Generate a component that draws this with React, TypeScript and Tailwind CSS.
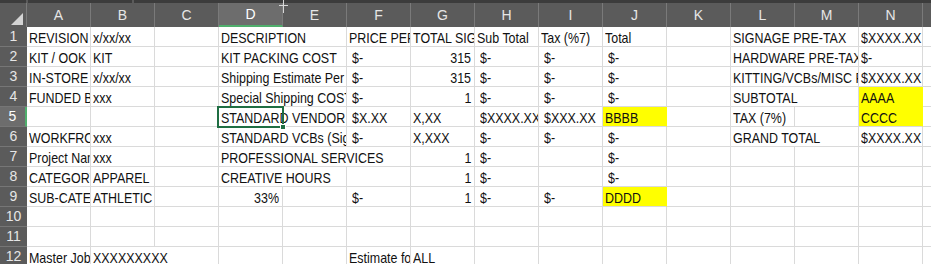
import React from "react";

type Cell = { c: number; t: string; s?: number; r?: boolean; y?: boolean; yb?: boolean };

const COLS = ["A", "B", "C", "D", "E", "F", "G", "H", "I", "J", "K", "L", "M", "N", "O"];

const SPAN: Record<number, string> = { 1: "", 2: "col-span-2", 3: "col-span-3" };

// accounting-format columns get a little extra left padding
const ACCT = [5, 7, 8, 9];

const ROWS: Cell[][] = [
  [
    { c: 0, t: "REVISION" }, { c: 1, t: "x/xx/xx" }, { c: 3, t: "DESCRIPTION", s: 2 },
    { c: 5, t: "PRICE PER" }, { c: 6, t: "TOTAL SIGNAGE" }, { c: 7, t: "Sub Total" },
    { c: 8, t: "Tax (%7)" }, { c: 9, t: "Total" }, { c: 11, t: "SIGNAGE PRE-TAX", s: 2 },
    { c: 13, t: "$XXXX.XX" },
  ],
  [
    { c: 0, t: "KIT / OOK" }, { c: 1, t: "KIT" }, { c: 3, t: "KIT PACKING COST", s: 2 },
    { c: 5, t: "$-" }, { c: 6, t: "315", r: true }, { c: 7, t: "$-" }, { c: 8, t: "$-" },
    { c: 9, t: "$-" }, { c: 11, t: "HARDWARE PRE-TAX", s: 2 }, { c: 13, t: "$-" },
  ],
  [
    { c: 0, t: "IN-STORE" }, { c: 1, t: "x/xx/xx" }, { c: 3, t: "Shipping Estimate Per Kit", s: 2 },
    { c: 5, t: "$-" }, { c: 6, t: "315", r: true }, { c: 7, t: "$-" }, { c: 8, t: "$-" },
    { c: 9, t: "$-" }, { c: 11, t: "KITTING/VCBs/MISC PRE-TAX", s: 2 }, { c: 13, t: "$XXXX.XX" },
  ],
  [
    { c: 0, t: "FUNDED BY" }, { c: 1, t: "xxx" }, { c: 3, t: "Special Shipping COST", s: 2 },
    { c: 5, t: "$-" }, { c: 6, t: "1", r: true }, { c: 7, t: "$-" }, { c: 8, t: "$-" },
    { c: 9, t: "$-" }, { c: 11, t: "SUBTOTAL", s: 2 }, { c: 13, t: "AAAA", y: true, yb: true },
  ],
  [
    { c: 3, t: "STANDARD VENDOR TAX", s: 2 }, { c: 5, t: "$X.XX" }, { c: 6, t: "X,XX" },
    { c: 7, t: "$XXXX.XX" }, { c: 8, t: "$XXX.XX" }, { c: 9, t: "BBBB", y: true },
    { c: 11, t: "TAX (7%)" }, { c: 13, t: "CCCC", y: true },
  ],
  [
    { c: 0, t: "WORKFRONT" }, { c: 1, t: "xxx" }, { c: 3, t: "STANDARD VCBs (Signage)", s: 2 },
    { c: 5, t: "$-" }, { c: 6, t: "X,XXX" }, { c: 7, t: "$-" }, { c: 8, t: "$-" },
    { c: 9, t: "$-" }, { c: 11, t: "GRAND TOTAL", s: 2 }, { c: 13, t: "$XXXX.XX" },
  ],
  [
    { c: 0, t: "Project Name" }, { c: 1, t: "xxx" }, { c: 3, t: "PROFESSIONAL SERVICES", s: 3 },
    { c: 6, t: "1", r: true }, { c: 7, t: "$-" }, { c: 9, t: "$-" },
  ],
  [
    { c: 0, t: "CATEGORY" }, { c: 1, t: "APPAREL" }, { c: 3, t: "CREATIVE HOURS", s: 2 },
    { c: 6, t: "1", r: true }, { c: 7, t: "$-" }, { c: 9, t: "$-" },
  ],
  [
    { c: 0, t: "SUB-CATEGORY" }, { c: 1, t: "ATHLETIC" }, { c: 3, t: "33%", r: true },
    { c: 5, t: "$-" }, { c: 6, t: "1", r: true }, { c: 7, t: "$-" }, { c: 8, t: "$-" },
    { c: 9, t: "DDDD", y: true },
  ],
  [],
  [],
  [
    { c: 0, t: "Master Job" }, { c: 1, t: "XXXXXXXXX", s: 2 }, { c: 5, t: "Estimate for" },
    { c: 6, t: "ALL" },
  ],
];

function fillRow(cells: Cell[]): Cell[] {
  const out: Cell[] = [];
  let col = 0;
  while (col < COLS.length) {
    const hit = cells.find(c => c.c === col);
    if (hit) {
      out.push(hit);
      col += hit.s || 1;
    } else {
      out.push({ c: col, t: "" });
      col += 1;
    }
  }
  return out;
}

function GridCell({ cell }: { cell: Cell }) {
  const pad = cell.r
    ? "justify-end pr-[3px]"
    : ACCT.includes(cell.c) && cell.t.startsWith("$")
      ? "pl-[5px]"
      : "pl-[2px]";
  return (
    <div
      className={`h-[20px] flex items-end pb-[1px] overflow-hidden whitespace-nowrap border-r border-b ${SPAN[cell.s || 1]} ${pad} ${
        cell.y ? "bg-[#ffff00] border-r-[#ffff00] border-b-[#dadada]" : "border-[#dadada]"
      } ${cell.yb ? "border-b-[#ffff00]" : ""}`}
    >
      {/* the sheet font is a narrow face; squeeze Liberation Sans to its width */}
      <span
        className={`inline-block shrink-0 leading-none text-[15px] text-[#111] scale-x-[0.83] ${
          cell.r ? "origin-right" : "origin-left"
        }`}
      >
        {cell.t}
      </span>
    </div>
  );
}

export default function App() {
  return (
    <div
      className="relative w-[931px] h-[264px] overflow-hidden bg-white"
      style={{ fontFamily: '"Liberation Sans", Arial, sans-serif' }}
    >
      {/* strip under the formula bar */}
      <div className="h-[3px] bg-[#3c3c3c] flex">
        <div className="w-[26px]" />
        <div className="w-[2px] bg-[#5b5b5b]" />
        <div className="w-[104px]" />
        <div className="w-[2px] bg-[#5b5b5b]" />
      </div>

      <div className="grid grid-cols-[27px_repeat(15,64px)]">
        {/* corner */}
        <div className="h-[24px] bg-[#5b5b5b] border-r border-[#7a7a7a] flex items-end justify-end pr-[3px] pb-[2px]">
          <svg width="12" height="12" viewBox="0 0 12 12">
            <polygon points="12,0 12,12 0,12" fill="#d4d4d4" />
          </svg>
        </div>
        {COLS.map((l, i) => (
          <div
            key={l}
            className={`h-[24px] flex items-center justify-center border-r border-[#7a7a7a] text-[14px] ${
              i === 3 ? "bg-[#6d6d6d] border-b-2 border-b-[#4fae6c] text-white" : "bg-[#5b5b5b] text-[#e6e6e6]"
            }`}
          >
            {l}
          </div>
        ))}

        {ROWS.map((row, ri) => (
          <React.Fragment key={ri}>
            <div
              className={`h-[20px] flex items-center justify-center border-b border-[#767676] text-[14px] ${
                ri === 4 ? "bg-[#6d6d6d] border-r-2 border-r-[#4fae6c] text-white" : "bg-[#5b5b5b] text-[#e6e6e6]"
              }`}
            >
              {ri + 1}
            </div>
            {fillRow(row).map(cell => (
              <GridCell key={cell.c} cell={cell} />
            ))}
          </React.Fragment>
        ))}
      </div>

      {/* active cell D5 */}
      <div className="absolute left-[217px] top-[106px] w-[67px] h-[22px] border-2 border-[#1f6e43] pointer-events-none">
        <div className="absolute -right-[4px] -bottom-[4px] w-[6px] h-[6px] bg-[#1f6e43] border border-white" />
      </div>

      {/* mouse cursor (column resize) */}
      <svg className="absolute left-[278px] top-0" width="11" height="14" viewBox="0 0 11 14">
        <line x1="5.5" y1="0" x2="5.5" y2="13" stroke="#d8d8d8" strokeWidth="1" />
        <line x1="1" y1="5.5" x2="10" y2="5.5" stroke="#d8d8d8" strokeWidth="1" />
      </svg>
    </div>
  );
}
